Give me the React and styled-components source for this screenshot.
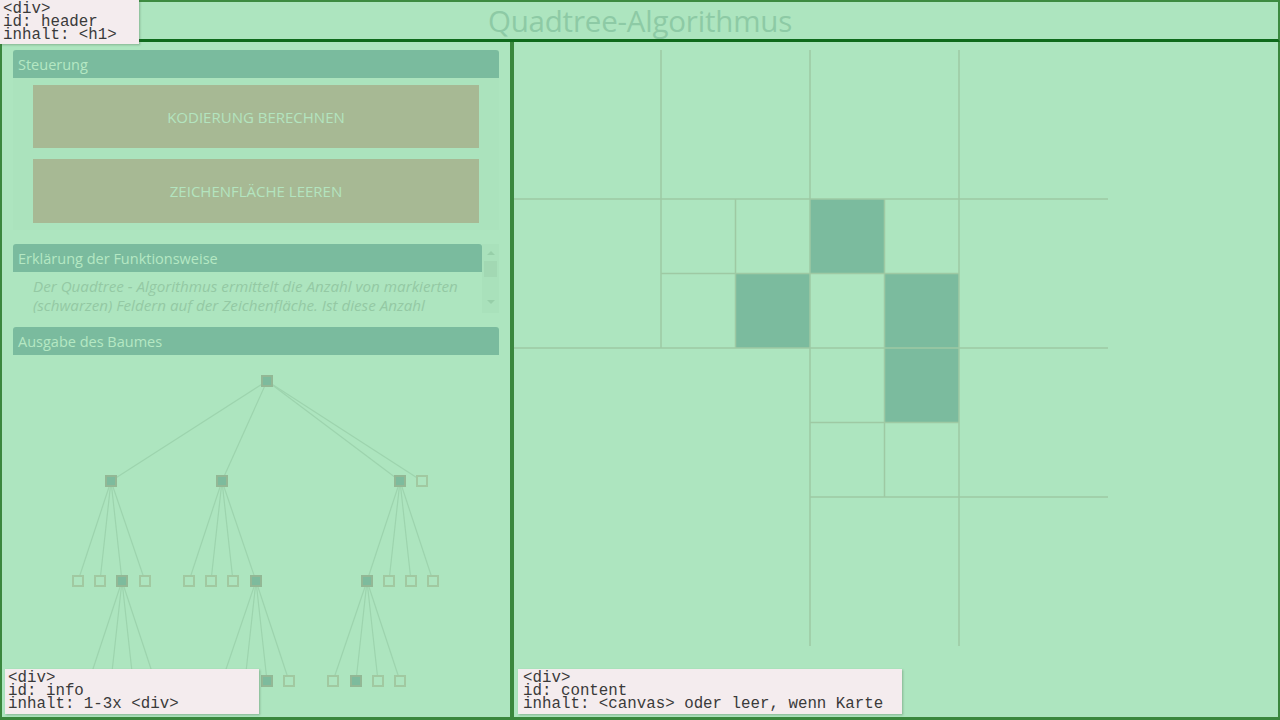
import React from "react";
import styled, { createGlobalStyle } from "styled-components";

const GlobalStyle = createGlobalStyle`
  html, body {
    margin: 0;
    padding: 0;
    background: #ade5bf;
  }
  body {
    font-family: "Open Sans", "Liberation Sans", sans-serif;
  }
`;

const Page = styled.div`
  position: relative;
  width: 1280px;
  height: 720px;
  display: flex;
  flex-direction: column;
  background: #ade5bf;
  overflow: hidden;
`;

const Header = styled.div`
  height: 37px;
  border: 2px solid #3d8b41;
  border-bottom: 3px solid #0f6a1c;
  display: flex;
  align-items: center;
  justify-content: center;

  h1 {
    margin: 0;
    font-size: 29.5px;
    line-height: 37px;
    font-weight: 400;
    color: #8dcaa5;
    letter-spacing: -0.2px;
  }
`;

const Main = styled.div`
  flex: 1;
  display: flex;
  min-height: 0;
`;

const Info = styled.div`
  width: 486px;
  border: 2px solid #3a873d;
  border-top: none;
  border-bottom-width: 3px;
  padding: 8px 11px 0;
  display: flex;
  flex-direction: column;
  overflow: hidden;
`;

const Content = styled.div`
  flex: 1;
  border: 2px solid #3a873d;
  border-top: none;
  border-bottom-width: 3px;
  padding-top: 8px;
  overflow: hidden;
`;

const Section = styled.div`
  margin-bottom: ${(p) => (p.$last ? 0 : 14)}px;
  background: ${(p) => (p.$tinted ? "#abe3bd" : "transparent")};
`;

const SectionTitle = styled.div`
  height: 28px;
  line-height: 29px;
  padding-left: 5px;
  background: #7abb9e;
  border-radius: 3px 3px 0 0;
  color: #b5e8c3;
  font-size: 14.5px;
`;

const Controls = styled.div`
  display: flex;
  flex-direction: column;
  gap: 11px;
  padding: 7px 20px 7px;
`;

const Button = styled.div`
  height: ${(p) => p.$h}px;
  background: #a7b994;
  color: #b3e4bf;
  font-size: 15px;
  display: flex;
  align-items: center;
  justify-content: center;
  text-transform: uppercase;
`;

const ScrollBox = styled.div`
  display: flex;
  height: 69px;
`;

const ScrollMain = styled.div`
  flex: 1;
  overflow: hidden;
`;

const Explanation = styled.p`
  margin: 0;
  padding: 5px 20px 0;
  font-size: 15.2px;
  line-height: 19px;
  font-style: italic;
  color: #94c9a4;
`;

const Scrollbar = styled.div`
  width: 17px;
  background: #a9e1bb;
  display: flex;
  flex-direction: column;
  align-items: center;
`;

const Arrow = styled.div`
  width: 0;
  height: 0;
  border-left: 4px solid transparent;
  border-right: 4px solid transparent;
  ${(p) =>
    p.$up
      ? "border-bottom: 4px solid #97cfa9; margin-top: 7px;"
      : "border-top: 4px solid #97cfa9; margin-top: auto; margin-bottom: 9px;"}
`;

const Thumb = styled.div`
  width: 13px;
  height: 16px;
  margin-top: 6px;
  background: #a2d8b3;
`;

const TreeWrap = styled.div`
  flex: 1;
  svg {
    display: block;
  }
`;

const CanvasWrap = styled.div`
  svg {
    display: block;
  }
`;

const Label = styled.div`
  position: absolute;
  left: ${(p) => p.$x}px;
  top: ${(p) => p.$y}px;
  width: ${(p) => p.$w}px;
  height: ${(p) => p.$h}px;
  box-sizing: border-box;
  padding: ${(p) => p.$pad};
  background: #f4ecee;
  box-shadow: 1px 1px 2px rgba(60, 90, 60, 0.35);
  font-family: "Liberation Mono", "Courier New", monospace;
  font-size: 15.8px;
  line-height: 13px;
  color: #3a3a3a;
  white-space: pre;
`;

// tree nodes in page coordinates
const tree = {
  x: 267, y: 381, f: true,
  c: [
    {
      x: 111, y: 481, f: true,
      c: [
        { x: 78, y: 581 },
        { x: 100, y: 581 },
        {
          x: 122, y: 581, f: true,
          c: [
            { x: 89, y: 681 },
            { x: 111, y: 681 },
            { x: 133, y: 681 },
            { x: 155, y: 681 },
          ],
        },
        { x: 145, y: 581 },
      ],
    },
    {
      x: 222, y: 481, f: true,
      c: [
        { x: 189, y: 581 },
        { x: 211, y: 581 },
        { x: 233, y: 581 },
        {
          x: 256, y: 581, f: true,
          c: [
            { x: 222, y: 681 },
            { x: 245, y: 681 },
            { x: 267, y: 681, f: true },
            { x: 289, y: 681 },
          ],
        },
      ],
    },
    {
      x: 400, y: 481, f: true,
      c: [
        {
          x: 367, y: 581, f: true,
          c: [
            { x: 333, y: 681 },
            { x: 356, y: 681, f: true },
            { x: 378, y: 681 },
            { x: 400, y: 681 },
          ],
        },
        { x: 389, y: 581 },
        { x: 411, y: 581 },
        { x: 433, y: 581 },
      ],
    },
    { x: 422, y: 481 },
  ],
};

const collect = (n, lines, nodes) => {
  nodes.push(n);
  (n.c || []).forEach((ch) => {
    lines.push([n.x, n.y, ch.x, ch.y]);
    collect(ch, lines, nodes);
  });
};

const Tree = () => {
  const lines = [];
  const nodes = [];
  collect(tree, lines, nodes);
  return (
    <svg width="486" height="362" viewBox="13 355 486 362">
      {lines.map(([a, b, c, d], i) => (
        <line key={i} x1={a} y1={b} x2={c} y2={d} stroke="#9dd4ae" strokeWidth="1.2" />
      ))}
      {nodes.map((n, i) => (
        <rect
          key={i}
          x={n.x - 5}
          y={n.y - 5}
          width="10"
          height="10"
          fill={n.f ? "#7dbb9d" : "#ade5bf"}
          stroke={n.f ? "#93b895" : "#a1c9a1"}
          strokeWidth="2"
        />
      ))}
    </svg>
  );
};

const H = 74.5;
const blackCells = [
  [223.5, 223.5],
  [298, 149],
  [372.5, 223.5],
  [372.5, 298],
];
const gridLines = [
  [149, 0, 149, 298],
  [298, 0, 298, 596],
  [447, 0, 447, 596],
  [223.5, 149, 223.5, 298],
  [372.5, 149, 372.5, 447],
  [0, 149, 596, 149],
  [0, 298, 596, 298],
  [298, 447, 596, 447],
  [149, 223.5, 447, 223.5],
  [298, 372.5, 447, 372.5],
];

const Canvas = () => (
  <svg width="596" height="596" viewBox="0 0 596 596" style={{ marginLeft: -2 }}>
    {blackCells.map(([x, y], i) => (
      <rect key={i} x={x} y={y} width={H} height={H} fill="#7bbb9e" />
    ))}
    {gridLines.map(([a, b, c, d], i) => (
      <line key={i} x1={a} y1={b} x2={c} y2={d} stroke="#9ec9a3" strokeWidth="1.5" />
    ))}
  </svg>
);

const App = () => (
  <Page>
    <GlobalStyle />
    <Header>
      <h1>Quadtree-Algorithmus</h1>
    </Header>
    <Main>
      <Info>
        <Section $tinted>
          <SectionTitle>Steuerung</SectionTitle>
          <Controls>
            <Button $h={63}>Kodierung berechnen</Button>
            <Button $h={64}>Zeichenfläche leeren</Button>
          </Controls>
        </Section>
        <Section>
          <ScrollBox>
            <ScrollMain>
              <SectionTitle>Erklärung der Funktionsweise</SectionTitle>
              <Explanation>
                Der Quadtree - Algorithmus ermittelt die Anzahl von markierten
                (schwarzen) Feldern auf der Zeichenfläche. Ist diese Anzahl
              </Explanation>
            </ScrollMain>
            <Scrollbar>
              <Arrow $up />
              <Thumb />
              <Arrow />
            </Scrollbar>
          </ScrollBox>
        </Section>
        <Section $last>
          <SectionTitle>Ausgabe des Baumes</SectionTitle>
        </Section>
        <TreeWrap>
          <Tree />
        </TreeWrap>
      </Info>
      <Content>
        <CanvasWrap>
          <Canvas />
        </CanvasWrap>
      </Content>
    </Main>
    <Label $x={0} $y={0} $w={139} $h={44} $pad="3px 0 0 3px">
      {"<div>\nid: header\ninhalt: <h1>"}
    </Label>
    <Label $x={5} $y={669} $w={254} $h={45} $pad="3px 0 0 3px">
      {"<div>\nid: info\ninhalt: 1-3x <div>"}
    </Label>
    <Label $x={518} $y={669} $w={384} $h={45} $pad="3px 0 0 5px">
      {"<div>\nid: content\ninhalt: <canvas> oder leer, wenn Karte"}
    </Label>
  </Page>
);

export default App;
